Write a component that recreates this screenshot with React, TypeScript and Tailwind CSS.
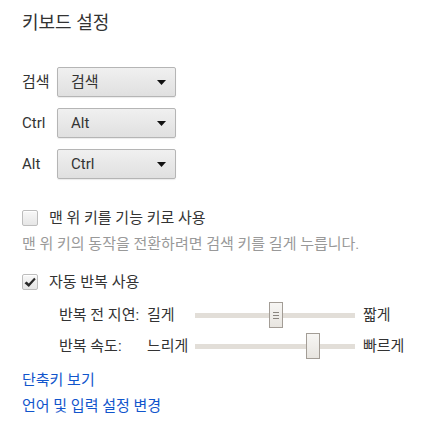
import React from "react";

const font = { fontFamily: 'Roboto, "Noto Sans CJK KR", sans-serif' };

function Select({ value }: { value: string }) {
  return (
    <div className="flex h-[30px] w-[119px] items-center justify-between rounded-[2px] border border-[#b5b5b5] bg-gradient-to-b from-[#f0f0f0] to-[#e0e0e0] pl-[13px] pr-[9px] shadow-[0_1px_1px_rgba(0,0,0,0.08)]">
      <span className="text-[#333]">{value}</span>
      <svg width="9" height="5" viewBox="0 0 9 5">
        <path d="M0 0 L9 0 L4.5 5 Z" fill="#111" />
      </svg>
    </div>
  );
}

function Checkbox({ checked }: { checked?: boolean }) {
  return (
    <div className="flex h-[16px] w-[16px] shrink-0 items-center justify-center rounded-[2px] border border-[#bdbdbd] bg-gradient-to-b from-[#f8f8f8] to-[#e6e6e6] shadow-[inset_0_1px_0_#fff]">
      {checked && (
        <svg width="12" height="11" viewBox="0 0 12 11">
          <path d="M0.5 6.3 L2.6 4.4 L4.8 6.6 L10.2 0.8 L11.7 2.3 L4.8 10 Z" fill="#2a2a2a" />
        </svg>
      )}
    </div>
  );
}

function Slider({ left, grip }: { left: number; grip?: boolean }) {
  return (
    <div className="relative flex h-[26px] w-[160px] items-center">
      <div className="h-[5px] w-full bg-[#e2ded8]" />
      <div
        className="absolute top-0 flex h-[26px] w-[14px] flex-col items-center justify-center gap-[2px] border border-[#a39d96] bg-gradient-to-b from-[#f7f6f4] to-[#e8e5e0]"
        style={{ left }}
      >
        {grip && (
          <>
            <div className="h-px w-[6px] bg-[#8a857f]" />
            <div className="h-px w-[6px] bg-[#8a857f]" />
            <div className="h-px w-[6px] bg-[#8a857f]" />
          </>
        )}
      </div>
    </div>
  );
}

export default function App() {
  return (
    <div className="h-[433px] w-[433px] bg-white pl-[22px] text-[15px] leading-[20px] text-[#333]" style={font}>
      <div className="pt-[11px] text-[18px] leading-[24px] text-[#333]">키보드 설정</div>

      <div className="mt-[32px] flex flex-col gap-[11px]">
        {[
          ["검색", "검색"],
          ["Ctrl", "Alt"],
          ["Alt", "Ctrl"],
        ].map(([label, value]) => (
          <div key={label} className="flex items-center">
            <span className="w-[35px]">{label}</span>
            <Select value={value} />
          </div>
        ))}
      </div>

      <div className="mt-[29px] flex h-[20px] items-center gap-[11px]">
        <Checkbox />
        <span>맨 위 키를 기능 키로 사용</span>
      </div>
      <div className="mt-[6px] text-[#999]">맨 위 키의 동작을 전환하려면 검색 키를 길게 누릅니다.</div>

      <div className="mt-[18px] flex h-[20px] items-center gap-[11px]">
        <Checkbox checked />
        <span>자동 반복 사용</span>
      </div>

      <div className="mt-[10px] grid grid-cols-[88px_48px_160px_auto] items-center gap-y-[5px] pl-[37px]">
        <span>반복 전 지연:</span>
        <span>길게</span>
        <Slider left={74} grip />
        <span className="pl-[8px]">짧게</span>
        <span>반복 속도:</span>
        <span>느리게</span>
        <Slider left={111} />
        <span className="pl-[8px]">빠르게</span>
      </div>

      <div className="mt-[11px] flex flex-col gap-[6px] text-[#1155cc]">
        <span>단축키 보기</span>
        <span>언어 및 입력 설정 변경</span>
      </div>
    </div>
  );
}
